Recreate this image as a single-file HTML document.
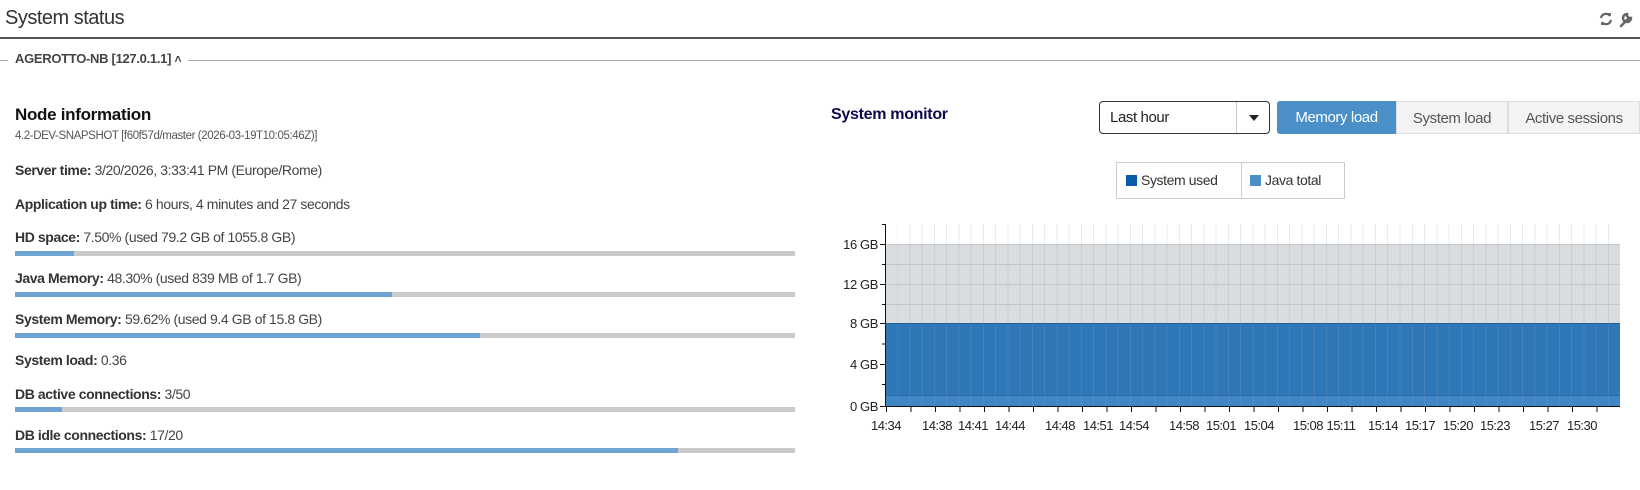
<!DOCTYPE html>
<html><head><meta charset="utf-8"><style>
*{margin:0;padding:0;box-sizing:border-box}
body{width:1640px;height:490px;background:#fff;font-family:"Liberation Sans",sans-serif;color:#444;position:relative;overflow:hidden}
.a{position:absolute;white-space:nowrap}
.t{font-size:14px;letter-spacing:-0.4px}
.t b{color:#333}
.bar{position:absolute;left:15px;width:780px;height:5px;background:#cbcbcb}
.bar i{display:block;height:5px;background:#6fa3d2}
.btn{position:absolute;top:101px;height:33px;font-size:15px;line-height:33px;text-align:center;letter-spacing:-0.4px}
.xl{position:absolute;top:418px;font-size:13px;color:#222;transform:translateX(-50%);letter-spacing:-0.5px}
.yl{position:absolute;left:820px;width:58px;text-align:right;font-size:13px;color:#222;letter-spacing:-0.4px}
</style></head><body>
<div class="a" style="left:5px;top:7px;font-size:20px;color:#333;letter-spacing:-0.5px">System status</div>
<svg class="a" style="left:1598px;top:10px" width="40" height="18" viewBox="0 0 40 18"><path d="M3 8a5 5 0 0 1 9-2M13 10a5 5 0 0 1-9 2" stroke="#666" stroke-width="2.2" fill="none"/><path d="M10 3l3 0 0 3z M6 15l-3 0 0-3z" fill="#666"/><path d="M23 16l7-7M29 4a4 4 0 1 0 4 4l-2 0-2-2z" stroke="#666" stroke-width="2.5" fill="none" stroke-linecap="round"/></svg>
<div class="a" style="left:0;top:37px;width:1640px;height:2px;background:#555"></div>
<div class="a" style="left:0;top:60px;width:1640px;height:1px;background:#aaa"></div>
<div class="a" style="left:8px;top:51px;background:#fff;padding:0 7px;font-size:13px;font-weight:bold;color:#444;letter-spacing:-0.3px">AGEROTTO-NB [127.0.1.1] <span style="font-size:12px">&#708;</span></div>
<div class="a" style="left:15px;top:105px;font-size:17px;font-weight:bold;color:#111;letter-spacing:-0.3px">Node information</div>
<div class="a" style="left:15px;top:130px;font-size:11.5px;color:#555;letter-spacing:-0.4px">4.2-DEV-SNAPSHOT [f60f57d/master (2026-03-19T10:05:46Z)]</div>
<div class="a t" style="left:15px;top:162px"><b>Server time:</b> 3/20/2026, 3:33:41 PM (Europe/Rome)</div>
<div class="a t" style="left:15px;top:196px"><b>Application up time:</b> 6 hours, 4 minutes and 27 seconds</div>
<div class="a t" style="left:15px;top:229px"><b>HD space:</b> 7.50% (used 79.2 GB of 1055.8 GB)</div>
<div class="bar" style="top:251px"><i style="width:59px"></i></div>
<div class="a t" style="left:15px;top:270px"><b>Java Memory:</b> 48.30% (used 839 MB of 1.7 GB)</div>
<div class="bar" style="top:292px"><i style="width:377px"></i></div>
<div class="a t" style="left:15px;top:311px"><b>System Memory:</b> 59.62% (used 9.4 GB of 15.8 GB)</div>
<div class="bar" style="top:333px"><i style="width:465px"></i></div>
<div class="a t" style="left:15px;top:352px"><b>System load:</b> 0.36</div>
<div class="a t" style="left:15px;top:386px"><b>DB active connections:</b> 3/50</div>
<div class="bar" style="top:407px"><i style="width:47px"></i></div>
<div class="a t" style="left:15px;top:427px"><b>DB idle connections:</b> 17/20</div>
<div class="bar" style="top:448px"><i style="width:663px"></i></div>

<div class="a" style="left:831px;top:106px;font-size:16px;font-weight:bold;color:#0b0b4b;letter-spacing:-0.3px">System monitor</div>
<div class="a" style="left:1099px;top:101px;width:171px;height:33px;border:1px solid #333;border-radius:4px;font-size:15px;line-height:31px;padding-left:10px;color:#222;letter-spacing:-0.4px">Last hour
<div style="position:absolute;left:136px;top:0;width:1px;height:31px;background:#ccc"></div>
<div style="position:absolute;left:149px;top:13px;border-left:5px solid transparent;border-right:5px solid transparent;border-top:6px solid #222"></div></div>
<div class="btn" style="left:1277px;width:119px;background:#4a8fc8;color:#fff;border-radius:3px 0 0 3px">Memory load</div>
<div class="btn" style="left:1396px;width:112px;background:#f3f3f3;border:1px solid #ddd;color:#555">System load</div>
<div class="btn" style="left:1508px;width:132px;background:#f3f3f3;border:1px solid #ddd;color:#555">Active sessions</div>
<div class="a" style="left:1116px;top:162px;width:229px;height:37px;border:1px solid #ccc;font-size:14px;line-height:35px;color:#333;letter-spacing:-0.4px">
<span style="position:absolute;left:9px;top:12px;width:11px;height:11px;background:#0a5ca8"></span><span style="position:absolute;left:24px">System used</span>
<span style="position:absolute;left:124px;top:0;width:1px;height:35px;background:#ccc"></span>
<span style="position:absolute;left:133px;top:12px;width:11px;height:11px;background:#4a8fc8"></span><span style="position:absolute;left:148px">Java total</span></div>

<div class="a" style="left:886px;top:244px;width:734px;height:80px;background:#d9dde0;background-image:repeating-linear-gradient(180deg,#c3c7ca 0,#c3c7ca 1px,transparent 1px,transparent 20px)"></div>
<div class="a" style="left:886px;top:323px;width:734px;height:83px;background:#2e78b7;border-top:1px solid #1f5f95"></div>
<div class="a" style="left:886px;top:395px;width:734px;height:11px;background:#4186c4;border-top:1px solid #2a6aa5"></div>
<div class="a" style="left:886px;top:224px;width:734px;height:182px;background-image:repeating-linear-gradient(90deg,transparent 0,transparent 11.25px,rgba(150,160,170,0.22) 11.25px,rgba(150,160,170,0.22) 12.25px)"></div>
<div class="a" style="left:885px;top:224px;width:1px;height:183px;background:#111"></div>
<div class="a" style="left:885px;top:406px;width:735px;height:1px;background:#111"></div>
<svg class="a" style="left:878px;top:224px" width="8" height="184"><path d="M2 20.5h6M2 60.5h6M2 99.5h6M2 140.5h6M2 182.5h6M4 0.5h4M4 40.5h4M4 80.5h4M4 120h4M4 160.5h4" stroke="#111"/></svg>
<div class="a" style="left:886px;top:407px;width:734px;height:5px;background-image:repeating-linear-gradient(90deg,#111 0,#111 1px,transparent 1px,transparent 24.5px)"></div>
<div class="yl" style="top:237px">16 GB</div><div class="yl" style="top:277px">12 GB</div><div class="yl" style="top:316px">8 GB</div><div class="yl" style="top:357px">4 GB</div><div class="yl" style="top:399px">0 GB</div>
<div class="xl" style="left:886px">14:34</div><div class="xl" style="left:937px">14:38</div><div class="xl" style="left:973px">14:41</div><div class="xl" style="left:1010px">14:44</div><div class="xl" style="left:1060px">14:48</div><div class="xl" style="left:1098px">14:51</div><div class="xl" style="left:1134px">14:54</div><div class="xl" style="left:1184px">14:58</div><div class="xl" style="left:1221px">15:01</div><div class="xl" style="left:1259px">15:04</div><div class="xl" style="left:1308px">15:08</div><div class="xl" style="left:1341px">15:11</div><div class="xl" style="left:1383px">15:14</div><div class="xl" style="left:1420px">15:17</div><div class="xl" style="left:1458px">15:20</div><div class="xl" style="left:1495px">15:23</div><div class="xl" style="left:1544px">15:27</div><div class="xl" style="left:1582px">15:30</div>
</body></html>
